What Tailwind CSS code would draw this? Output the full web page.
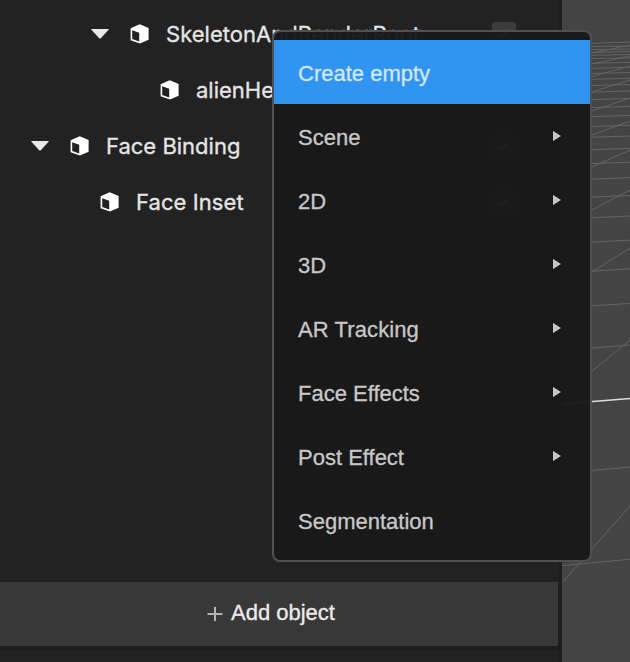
<!DOCTYPE html>
<html lang="en">
<head>
<meta charset="utf-8">
<title>Scene hierarchy</title>
<script src="https://cdn.jsdelivr.net/npm/@tailwindcss/browser@4"></script>
</head>
<body class="bg-[#1e1e1e]">
<svg class="hidden">
  <symbol id="cube" viewBox="0 0 19 20"><path fill="#fff" fill-rule="evenodd" d="M9.7 .3 18.6 4V15.7L10 19.5.6 16.2V4.2ZM2.2 6.3V15L9.2 17.4V8.7Z"/></symbol>
  <symbol id="down" viewBox="0 0 18 10"><path fill="#e8e8e8" d="M.5 0H17.5Q18 .3 17.6.8L9.8 9.3Q9 10 8.2 9.3L.4.8Q0 .3.5 0Z"/></symbol>
  <symbol id="check" viewBox="0 0 24 24"><rect width="24" height="24" rx="3" fill="currentColor"/><path d="m6.5 12 3.5 3.5 7.5-7" fill="none" stroke="#d8d8d8" stroke-width="2"/></symbol>
  <symbol id="right" viewBox="0 0 8 10"><path fill="#c8c8c8" d="M0 0 8 5 0 10Z"/></symbol>
</svg>
<main class="relative flex h-[662px] w-[630px] overflow-hidden">
  <section class="flex w-[562px] shrink-0 flex-col bg-[#1e1e1e] pr-1 text-[22px] text-[#e6e6e6] [-webkit-text-stroke:0.3px]">
    <div class="flex h-[582px] flex-col bg-[#222222] pt-1.5 font-['Inter',sans-serif]">
      <div class="flex h-14 items-center pr-[42px] pl-[91px]">
        <svg class="h-2.5 w-[18px]"><use href="#down"/></svg><svg class="ml-[21px] h-5 w-[19px]"><use href="#cube"/></svg><span class="ml-[17px] tracking-[0.02px]">SkeletonAndRenderRoot</span><svg class="ml-auto size-6 text-[#3c3c3c]"><use href="#check"/></svg>
      </div>
      <div class="flex h-14 items-center pr-[42px] pl-[160px]">
        <svg class="h-5 w-[19px]"><use href="#cube"/></svg><span class="ml-[17px]">alienHead</span>
      </div>
      <div class="flex h-14 items-center pr-[42px] pl-[31px]">
        <svg class="h-2.5 w-[18px]"><use href="#down"/></svg><svg class="ml-[21px] h-5 w-[19px]"><use href="#cube"/></svg><span class="ml-[17px]">Face Binding</span><svg class="ml-auto size-6 text-[#3c3c3c]"><use href="#check"/></svg>
      </div>
      <div class="flex h-14 items-center pr-[42px] pl-[100px]">
        <svg class="h-5 w-[19px]"><use href="#cube"/></svg><span class="ml-[17px] tracking-[0.08px]">Face Inset</span><svg class="ml-auto size-6 text-[#3c3c3c]"><use href="#check"/></svg>
      </div>
    </div>
    <div class="flex h-16 items-center bg-[#383838] pb-1 pl-[207px] font-['Liberation_Sans',Arial,sans-serif]">
      <svg class="mt-1 size-4" viewBox="0 0 16 16"><path d="M8 1V15M.5 8H15.5" stroke="#b4b4b4" stroke-width="2"/></svg><span class="ml-2 text-[#ededed]">Add object</span>
    </div>
    <div class="mt-1 h-3 bg-[#222222]"></div>
  </section>
  <section class="w-[68px] shrink-0 bg-[#444444]">
    <svg class="h-[662px] w-[68px]" viewBox="562 0 68 662" fill="none" stroke="#646464" stroke-width="1">
      <path d="M562 44.5 630 42M562 47 630 46M562 50 630 49M562 53 630 51.5M562 56 630 54.5M562 59 630 58M562 64 630 62.3M562 69 630 67.3M562 74.3 630 72.5M562 80 630 78.3M562 86.3 630 84.5M562 93 630 91M562 100.5 630 98.4M562 108.5 630 106.4M562 117.5 630 115.4M562 127.7 630 125.2M562 138 630 136M562 150.7 630 148.4M562 164.7 630 162.2M562 180.2 630 177.7M562 198.5 630 195.5M562 219 630 216M562 243.5 630 240.2M562 273 630 268.8M562 307.5 630 303.5M562 350.4 630 345M562 473.3 630 467M562 565.7 630 559.3"/>
      <path d="M592 53 630 45M592 64 630 56M592 76.5 630 66M592 92 630 80M592 111 630 98M592 135 630 121M592 167 630 150M592 210 630 190M592 272 630 248M592 371 630 340M562 583 592 549 630 506"/>
      <path d="M562 404 630 398.5" stroke="#dedede" stroke-width="1.3"/>
    </svg>
  </section>
  <nav class="absolute top-[30px] left-[272px] w-80 rounded-lg border-2 border-[#505050] bg-[#191919]/97 py-2 font-['Liberation_Sans',Arial,sans-serif] text-[22px] text-[#c8c8c8] [-webkit-text-stroke:0.3px]">
    <div class="flex h-16 items-center bg-[#3094f3] pl-6 text-[#d5e8fb]"><span class="pt-[3px]">Create empty</span></div>
    <div class="flex h-16 items-center justify-between pr-[29px] pl-6"><span class="pt-[3px]">Scene</span><svg class="h-2.5 w-2"><use href="#right"/></svg></div>
    <div class="flex h-16 items-center justify-between pr-[29px] pl-6"><span class="pt-[3px]">2D</span><svg class="h-2.5 w-2"><use href="#right"/></svg></div>
    <div class="flex h-16 items-center justify-between pr-[29px] pl-6"><span class="pt-[3px]">3D</span><svg class="h-2.5 w-2"><use href="#right"/></svg></div>
    <div class="flex h-16 items-center justify-between pr-[29px] pl-6"><span class="pt-[3px] tracking-[0.1px]">AR Tracking</span><svg class="h-2.5 w-2"><use href="#right"/></svg></div>
    <div class="flex h-16 items-center justify-between pr-[29px] pl-6"><span class="pt-[3px]">Face Effects</span><svg class="h-2.5 w-2"><use href="#right"/></svg></div>
    <div class="flex h-16 items-center justify-between pr-[29px] pl-6"><span class="pt-[3px]">Post Effect</span><svg class="h-2.5 w-2"><use href="#right"/></svg></div>
    <div class="flex h-16 items-center pl-6"><span class="pt-[3px]">Segmentation</span></div>
  </nav>
</main>
</body>
</html>
